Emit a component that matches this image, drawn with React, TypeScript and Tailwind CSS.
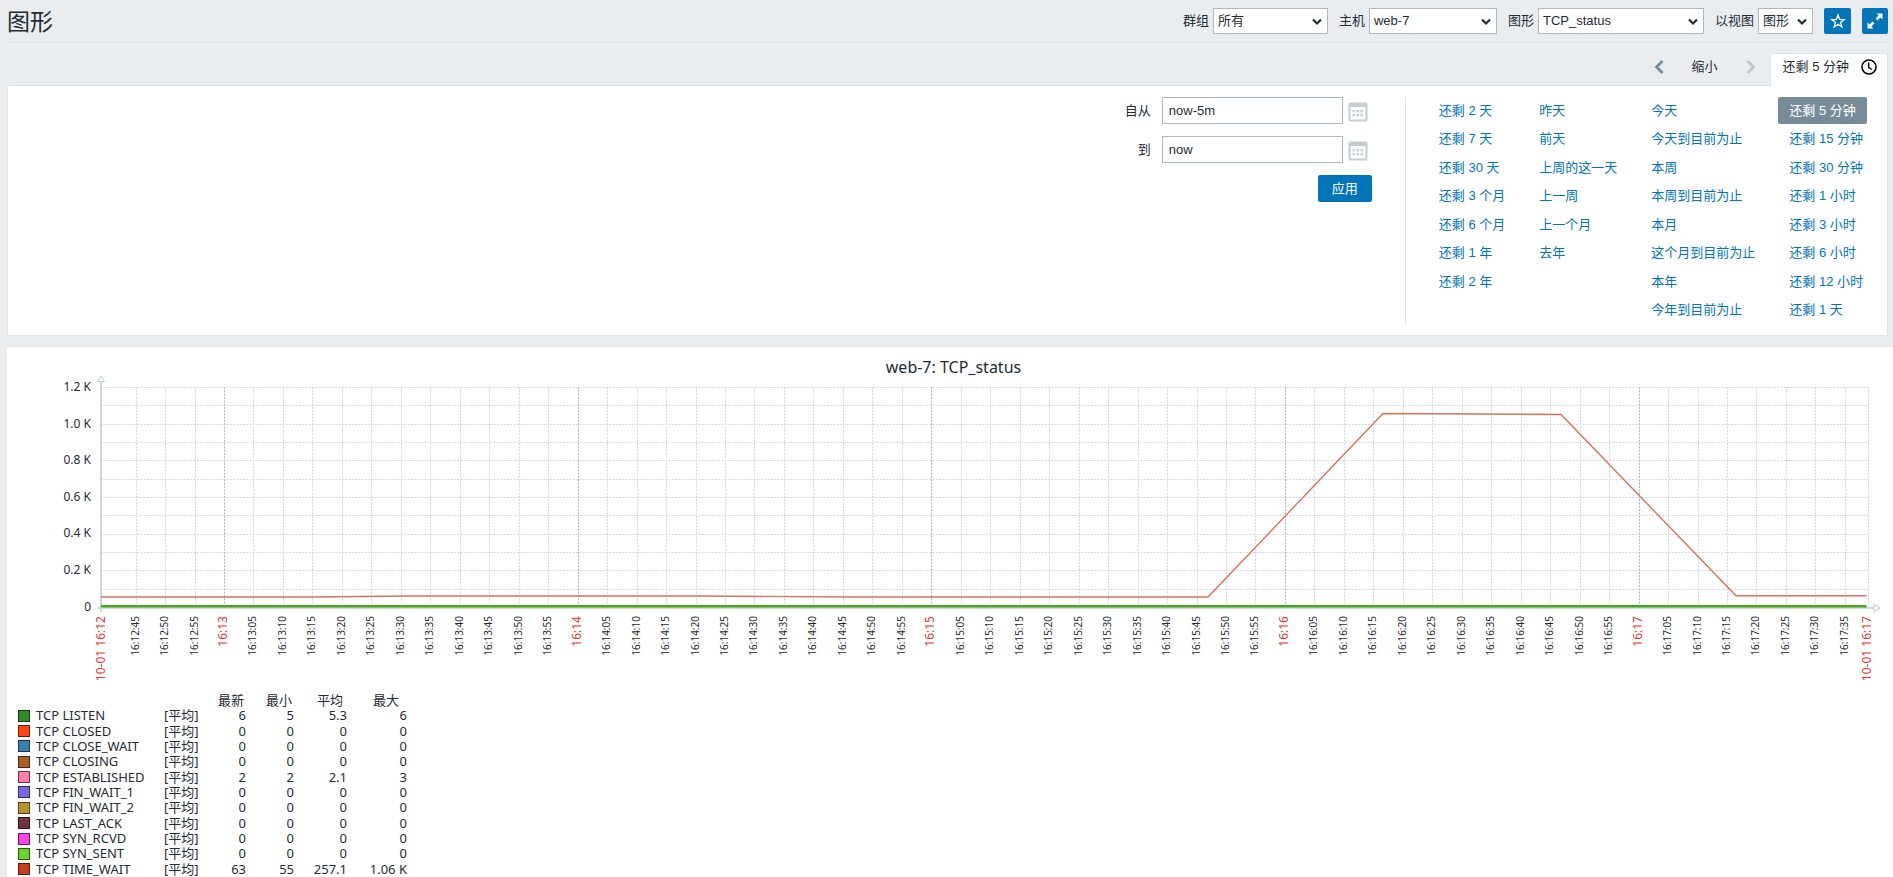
import React from "react";

const PERIODS: string[][] = [
  ["还剩 2 天", "还剩 7 天", "还剩 30 天", "还剩 3 个月", "还剩 6 个月", "还剩 1 年", "还剩 2 年"],
  ["昨天", "前天", "上周的这一天", "上一周", "上一个月", "去年"],
  ["今天", "今天到目前为止", "本周", "本周到目前为止", "本月", "这个月到目前为止", "本年", "今年到目前为止"],
  ["还剩 5 分钟", "还剩 15 分钟", "还剩 30 分钟", "还剩 1 小时", "还剩 3 小时", "还剩 6 小时", "还剩 12 小时", "还剩 1 天"],
];
const ACTIVE_PERIOD = "还剩 5 分钟";

const FILTERS = [
  { id: "group", label: "群组", value: "所有", width: "w-[115px]" },
  { id: "host", label: "主机", value: "web-7", width: "w-32" },
  { id: "graph", label: "图形", value: "TCP_status", width: "w-[166px]" },
  { id: "view", label: "以视图", value: "图形", width: "w-[55px]" },
];

const SERIES = [
  { name: "TCP LISTEN", swatch: "bg-[#33892b]", values: ["6", "5", "5.3", "6"] },
  { name: "TCP CLOSED", swatch: "bg-[#ff4719]", values: ["0", "0", "0", "0"] },
  { name: "TCP CLOSE_WAIT", swatch: "bg-[#3a80ab]", values: ["0", "0", "0", "0"] },
  { name: "TCP CLOSING", swatch: "bg-[#ac5f28]", values: ["0", "0", "0", "0"] },
  { name: "TCP ESTABLISHED", swatch: "bg-[#ff7eac]", values: ["2", "2", "2.1", "3"] },
  { name: "TCP FIN_WAIT_1", swatch: "bg-[#7d67e0]", values: ["0", "0", "0", "0"] },
  { name: "TCP FIN_WAIT_2", swatch: "bg-[#b39529]", values: ["0", "0", "0", "0"] },
  { name: "TCP LAST_ACK", swatch: "bg-[#71343f]", values: ["0", "0", "0", "0"] },
  { name: "TCP SYN_RCVD", swatch: "bg-[#f845e4]", values: ["0", "0", "0", "0"] },
  { name: "TCP SYN_SENT", swatch: "bg-[#6bd32d]", values: ["0", "0", "0", "0"] },
  { name: "TCP TIME_WAIT", swatch: "bg-[#c63f1b]", values: ["63", "55", "257.1", "1.06 K"] },
];

function Star() {
  return (
    <svg viewBox="0 0 16 16" className="h-4 w-4" fill="none" stroke="currentColor" strokeWidth="1.3" strokeLinejoin="miter">
      <path d="M8 2 9.600 6.300 14.200 6.500 10.600 9.400 11.900 13.900 8 11.300 4.100 13.900 5.400 9.400 1.800 6.500 6.400 6.300Z" />
    </svg>
  );
}

function Expand() {
  return (
    <svg viewBox="0 0 16 16" className="h-4 w-4" fill="currentColor">
      <path d="M9.500.500H15.500V6.500L13.400 4.400 10.400 7.400 8.600 5.600 11.600 2.600z" />
      <path d="M6.500 15.500H.5V9.500L2.600 11.600 5.600 8.600 7.400 10.400 4.400 13.400z" />
    </svg>
  );
}

function Chevron({ flip }: { flip?: boolean }) {
  return (
    <svg viewBox="0 0 10 14" className="h-3.5 w-2.5" fill="none" stroke="currentColor" strokeWidth="2.800">
      <path d={flip ? "M1.500 1 7.500 7 1.500 13" : "M8.500 1 2.500 7 8.500 13"} />
    </svg>
  );
}

function SelectArrow() {
  return (
    <svg viewBox="0 0 10 8" className="pointer-events-none absolute right-1.5 top-2.5 h-2 w-2.5" fill="none" stroke="#1f2c33" strokeWidth="2.200">
      <path d="M1 1.500 5 5.500 9 1.500" />
    </svg>
  );
}

function Clock() {
  return (
    <svg viewBox="0 0 16 16" className="h-4 w-4" fill="none" stroke="#000" strokeWidth="1.600">
      <circle cx="8" cy="8" r="7" />
      <path d="M7.700 3.500V8.500L11 10.500" strokeWidth="1.400" />
    </svg>
  );
}

function Calendar() {
  return (
    <svg viewBox="0 0 20 20" className="h-5 w-5">
      <rect x="0.500" y="0.500" width="19" height="19" rx="2" fill="#c3cdd2" />
      <rect x="2.500" y="5" width="15" height="12.500" fill="#fff" />
      {[5, 9, 13].map((x) =>
        [8, 12].map((y) => <rect key={`${x}-${y}`} x={x - 0.5} y={y} width="2.400" height="2.400" fill="#c3cdd2" />),
      )}
    </svg>
  );
}

const AXIS_X = 94;
const BASE_Y = 260.5;
const TOP_Y = 40;
const RIGHT_X = 1861;
const FIRST_TICK = 129.1;
const TICK_STEP = 29.47;

function tickLabel(i: number) {
  const s = 12 * 60 + 45 + i * 5;
  const mm = String(Math.floor(s / 60)).padStart(2, "0");
  const ss = s % 60;
  return ss === 0 ? `16:${mm}` : `16:${mm}:${String(ss).padStart(2, "0")}`;
}

function Chart() {
  const ticks = Array.from({ length: 59 }, (_, i) => ({
    x: Math.floor(FIRST_TICK + i * TICK_STEP),
    label: tickLabel(i),
  }));
  const rows = Array.from({ length: 12 }, (_, i) => Math.round(TOP_Y + i * 18.33));
  return (
    <svg viewBox="0 0 1886 345" className="block w-full" role="img" aria-label="web-7: TCP_status" fontFamily="'Noto Sans', 'Noto Sans CJK SC', sans-serif">
      <text x="946.5" y="26" textAnchor="middle" fontSize="16" fill="#1f2c33">web-7: TCP_status</text>
      <g stroke="#cfd8dd" strokeDasharray="2 1.300">
        {rows.map((y) => (
          <line key={y} x1={AXIS_X} x2={RIGHT_X} y1={y + 0.5} y2={y + 0.5} />
        ))}
        {ticks.map((t) => (
          <line key={t.x} x1={t.x + 0.5} x2={t.x + 0.5} y1={TOP_Y} y2={BASE_Y} stroke={t.label.length === 5 ? "#a9b7be" : "#cfd8dd"} />
        ))}
        <line x1={RIGHT_X + 0.5} x2={RIGHT_X + 0.5} y1={TOP_Y} y2={BASE_Y} />
      </g>
      <g stroke="#c3cdd2" fill="#fff">
        <line x1={AXIS_X} x2={AXIS_X} y1="34" y2="265" strokeWidth="1.600" />
        <line x1="90" x2="1867" y1="261" y2="261" strokeWidth="1.600" />
        <path d="M90.500 34.500 94 29 97.500 34.500Z" />
        <path d="M1867 257.500 1873 261 1867 264.500Z" />
      </g>
      <polyline
        points="94,250 306,250 403,249 694,249 840,250 1201,250 1376,66.500 1554,67.500 1729,248.800 1859.500,248.800"
        fill="none"
        stroke="#d4745c"
        strokeWidth="1.400"
      />
      <line x1={AXIS_X} x2="1859.5" y1="259.3" y2="259.3" stroke="#43a81a" strokeWidth="2.600" />
      <g fontSize="12" fill="#1f2c33" textAnchor="end">
        {["1.2 K", "1.0 K", "0.8 K", "0.6 K", "0.4 K", "0.2 K", "0"].map((l, i) => (
          <text key={l} x="84" y={Math.round(44 + i * 36.6)}>{l}</text>
        ))}
      </g>
      <g textAnchor="end">
        {ticks.map((t) => {
          const major = t.label.length === 5;
          return (
            <text key={t.x} transform={`translate(${t.x + 3} 269) rotate(-90)`} fontSize={major ? 12 : 10} fill={major ? "#e33734" : "#1f2c33"}>
              {t.label}
            </text>
          );
        })}
        <text transform="translate(98 269) rotate(-90)" fontSize="12" fill="#e33734">10-01 16:12</text>
        <text transform="translate(1864 269) rotate(-90)" fontSize="12" fill="#e33734">10-01 16:17</text>
      </g>
    </svg>
  );
}

const HEADERS = [
  { label: "最新", pad: "pr-0.5" },
  { label: "最小", pad: "pr-0.5" },
  { label: "平均", pad: "pr-1" },
  { label: "最大", pad: "pr-2" },
];

function Legend() {
  return (
    <table className="ml-[11px] mt-px h-[184px] w-[389px] table-fixed border-collapse font-['Noto_Sans','Noto_Sans_CJK_SC',sans-serif] text-[13px] leading-[15px] text-[#1f2c33]">
      <colgroup>
        <col className="w-[18px]" />
        <col className="w-[128px]" />
        <col className="w-[38px]" />
        <col className="w-11" />
        <col className="w-12" />
        <col className="w-[53px]" />
        <col className="w-[60px]" />
      </colgroup>
      <thead>
        <tr>
          <td colSpan={3} className="p-0" />
          {HEADERS.map((h) => (
            <th key={h.label} scope="col" className={`p-0 text-right font-normal ${h.pad}`}>{h.label}</th>
          ))}
        </tr>
      </thead>
      <tbody>
        {SERIES.map((s) => (
          <tr key={s.name}>
            <td className="p-0"><div className={`h-3 w-3 border border-black/60 ${s.swatch}`} /></td>
            <td className="whitespace-nowrap p-0">{s.name}</td>
            <td className="whitespace-nowrap p-0">[平均]</td>
            {s.values.map((v, i) => (
              <td key={i} className="whitespace-nowrap p-0 text-right">{v}</td>
            ))}
          </tr>
        ))}
      </tbody>
    </table>
  );
}

export default function App() {
  return (
    <div className="h-screen overflow-hidden bg-[#e9edf0] font-['Liberation_Sans','Noto_Sans_CJK_SC',sans-serif] text-[13px] leading-4 text-[#1f2c33]">
      <header className="ml-[7px] mr-[5px] flex h-[43px] items-start justify-between border-b border-[#dfe4e7] pt-2">
        <h1 className="text-[23px] leading-7">图形</h1>
        <div className="flex items-center gap-[11px]">
          {FILTERS.map((f) => (
            <div key={f.id} className="flex items-center gap-1">
              <label htmlFor={f.id}>{f.label}</label>
              <div className="relative">
                <select id={f.id} className={`block h-[26px] appearance-none border border-[#acbbc2] bg-white pl-1 ${f.width}`}>
                  <option>{f.value}</option>
                </select>
                <SelectArrow />
              </div>
            </div>
          ))}
          <button aria-label="收藏" className="flex h-[26px] w-[27px] items-center justify-center rounded-xs bg-[#0275b8] text-white"><Star /></button>
          <button aria-label="全屏" className="flex h-[26px] w-[26px] items-center justify-center rounded-xs bg-[#0275b8] text-white"><Expand /></button>
        </div>
      </header>

      <nav className="ml-[7px] mr-[5px] flex items-end justify-end pt-2.5">
        <div className="flex h-8 items-center gap-7 pb-1 pr-3.5">
          <button aria-label="向前" className="text-[#768d99]"><Chevron /></button>
          <button>缩小</button>
          <button aria-label="向后" className="text-[#bcc7cd]"><Chevron flip /></button>
        </div>
        <a href="#period" className="relative z-10 -mb-px flex h-[33px] items-center gap-3 border border-b-0 border-[#dfe4e7] bg-white pb-1.5 pl-3 pr-2.5">
          还剩 5 分钟
          <Clock />
        </a>
      </nav>

      <section id="period" className="ml-[7px] mr-[5px] flex border border-[#dfe4e7] bg-white p-[11px]">
        <form className="flex flex-1 flex-col items-end gap-3 pr-[33px]">
          {[
            { id: "from", label: "自从", value: "now-5m" },
            { id: "to", label: "到", value: "now" },
          ].map((f) => (
            <div key={f.id} className="flex items-center pr-1">
              <label htmlFor={f.id} className="pr-[11px]">{f.label}</label>
              <input id={f.id} type="text" defaultValue={f.value} className="h-[27px] w-[181px] border border-[#acbbc2] px-1.5" />
              <button type="button" aria-label="日历" className="pl-[5px] pt-[3px]"><Calendar /></button>
            </div>
          ))}
          <button type="button" className="h-[27px] rounded-xs bg-[#0275b8] px-3.5 text-white">应用</button>
        </form>
        <div className="flex h-[227px] gap-3 border-l border-[#dfe4e7] pl-[22px] pr-0.5">
          {PERIODS.map((col) => (
            <ul key={col[0]} className="grid grid-rows-[repeat(8,27px)] content-between justify-items-start">
              {col.map((p) => (
                <li key={p}>
                  <a
                    href="#period"
                    className={`flex h-[27px] items-center whitespace-nowrap rounded-xs px-[11px] ${p === ACTIVE_PERIOD ? "bg-[#768d99] text-white" : "text-[#0275b8]"}`}
                  >
                    {p}
                  </a>
                </li>
              ))}
            </ul>
          ))}
        </div>
      </section>

      <main className="ml-[7px] mt-[11px] border-b border-[#ebeef0] bg-white">
        <Chart />
        <Legend />
      </main>
    </div>
  );
}
